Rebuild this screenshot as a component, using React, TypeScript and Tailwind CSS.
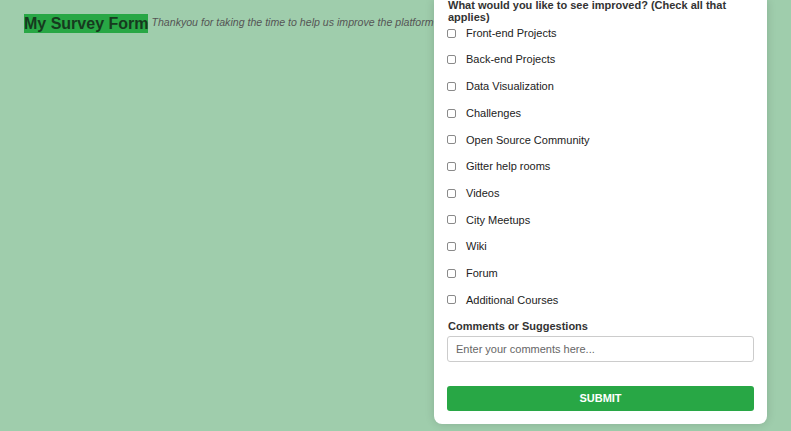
import React from "react";

const options = [
  "Front-end Projects",
  "Back-end Projects",
  "Data Visualization",
  "Challenges",
  "Open Source Community",
  "Gitter help rooms",
  "Videos",
  "City Meetups",
  "Wiki",
  "Forum",
  "Additional Courses",
];

export default function App() {
  return (
    <div className="min-h-screen bg-[#9fcdac] flex justify-between font-['Liberation_Sans',Arial,sans-serif] text-[#333]">
      {/* Header */}
      <div className="flex items-start pl-[24px] pt-[14px] min-w-0 flex-1">
        <h1 className="bg-[#28a745] text-[#163a1e] text-[16px] leading-[19px] font-bold whitespace-nowrap">
          My Survey Form
        </h1>
        <p className="ml-[3px] mt-[1px] text-[10.6px] leading-[14px] italic text-[#555] whitespace-nowrap">
          Thankyou for taking the time to help us improve the platform
        </p>
      </div>

      {/* Form card */}
      <div className="w-[333px] mr-[24px] mb-[7px] bg-white rounded-b-lg shadow-[0_0_10px_rgba(0,0,0,0.15)] px-[13px] pb-[13px] self-start">
        <p className="text-[11px] leading-[11.5px] font-bold pl-[1px]">
          What would you like to see improved? (Check all that applies)
        </p>

        <div className="flex flex-col gap-[12.7px] mt-[3px]">
          {options.map((o) => (
            <label key={o} className="flex items-center h-[14px] text-[11px] text-[#222]">
              <input
                type="checkbox"
                className="appearance-none w-[9px] h-[9px] m-0 shrink-0 border border-[#8a8a8a] rounded-[2px] bg-white"
              />
              <span className="ml-[10px]">{o}</span>
            </label>
          ))}
        </div>

        <p className="mt-[12px] text-[11px] leading-[14px] font-bold pl-[1px]">Comments or Suggestions</p>
        <input
          type="text"
          placeholder="Enter your comments here..."
          className="mt-[3px] w-full h-[26px] border border-[#ccc] rounded-[3px] px-[8px] text-[11px] placeholder:text-[#666] outline-none"
        />

        <button className="mt-[24px] w-full h-[25px] bg-[#28a745] rounded-[3px] text-white text-[11px] font-bold">
          SUBMIT
        </button>
      </div>
    </div>
  );
}
